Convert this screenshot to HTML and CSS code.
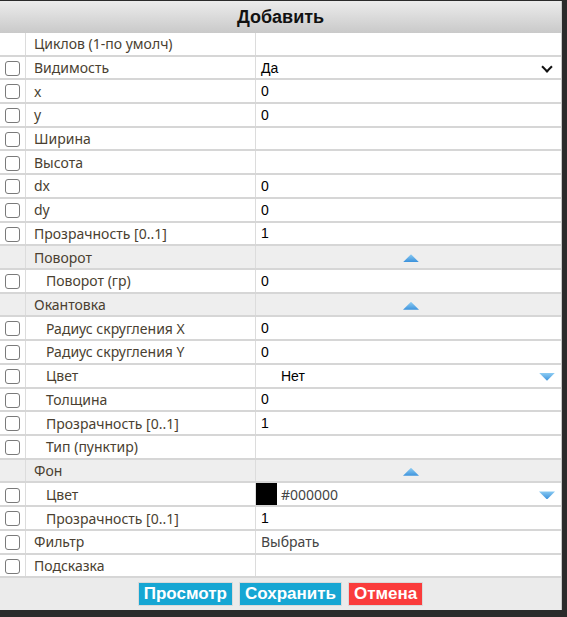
FILE: index.html
```html
<!DOCTYPE html>
<html lang="ru">
<head>
  <meta charset="UTF-8">
  <title>Добавить</title>
  <link rel="stylesheet" href="styles.css">
</head>
<body>
  <div class="window">
    <div class="title">Добавить</div>

    <table class="props">
      <tr>
        <td class="chk"></td>
        <td class="name">Циклов (1-по умолч)</td>
        <td class="val"></td>
      </tr>
      <tr>
        <td class="chk"><span class="box"></span></td>
        <td class="name">Видимость</td>
        <td class="val select">Да <span class="chevron"></span></td>
      </tr>
      <tr>
        <td class="chk"><span class="box"></span></td>
        <td class="name">x</td>
        <td class="val">0</td>
      </tr>
      <tr>
        <td class="chk"><span class="box"></span></td>
        <td class="name">y</td>
        <td class="val">0</td>
      </tr>
      <tr>
        <td class="chk"><span class="box"></span></td>
        <td class="name">Ширина</td>
        <td class="val"></td>
      </tr>
      <tr>
        <td class="chk"><span class="box"></span></td>
        <td class="name">Высота</td>
        <td class="val"></td>
      </tr>
      <tr>
        <td class="chk"><span class="box"></span></td>
        <td class="name">dx</td>
        <td class="val">0</td>
      </tr>
      <tr>
        <td class="chk"><span class="box"></span></td>
        <td class="name">dy</td>
        <td class="val">0</td>
      </tr>
      <tr>
        <td class="chk"><span class="box"></span></td>
        <td class="name">Прозрачность [0..1]</td>
        <td class="val">1</td>
      </tr>

      <tr class="group">
        <td class="chk"></td>
        <td class="name">Поворот</td>
        <td class="val center"><span class="tri-up"></span></td>
      </tr>
      <tr>
        <td class="chk"><span class="box"></span></td>
        <td class="name sub">Поворот (гр)</td>
        <td class="val">0</td>
      </tr>

      <tr class="group">
        <td class="chk"></td>
        <td class="name">Окантовка</td>
        <td class="val center"><span class="tri-up"></span></td>
      </tr>
      <tr>
        <td class="chk"><span class="box"></span></td>
        <td class="name sub">Радиус скругления X</td>
        <td class="val">0</td>
      </tr>
      <tr>
        <td class="chk"><span class="box"></span></td>
        <td class="name sub">Радиус скругления Y</td>
        <td class="val">0</td>
      </tr>
      <tr>
        <td class="chk"><span class="box"></span></td>
        <td class="name sub">Цвет</td>
        <td class="val picker"><span class="swatch empty"></span><span class="plain">Нет</span><span class="tri-down"></span></td>
      </tr>
      <tr>
        <td class="chk"><span class="box"></span></td>
        <td class="name sub">Толщина</td>
        <td class="val">0</td>
      </tr>
      <tr>
        <td class="chk"><span class="box"></span></td>
        <td class="name sub">Прозрачность [0..1]</td>
        <td class="val">1</td>
      </tr>
      <tr>
        <td class="chk"><span class="box"></span></td>
        <td class="name sub">Тип (пунктир)</td>
        <td class="val"></td>
      </tr>

      <tr class="group">
        <td class="chk"></td>
        <td class="name">Фон</td>
        <td class="val center"><span class="tri-up"></span></td>
      </tr>
      <tr>
        <td class="chk"><span class="box"></span></td>
        <td class="name sub">Цвет</td>
        <td class="val picker"><span class="swatch"></span><span class="hex">#000000</span><span class="tri-down"></span></td>
      </tr>
      <tr>
        <td class="chk"><span class="box"></span></td>
        <td class="name sub">Прозрачность [0..1]</td>
        <td class="val">1</td>
      </tr>
      <tr>
        <td class="chk"><span class="box"></span></td>
        <td class="name">Фильтр</td>
        <td class="val"><span class="link">Выбрать</span></td>
      </tr>
      <tr>
        <td class="chk"><span class="box"></span></td>
        <td class="name">Подсказка</td>
        <td class="val"></td>
      </tr>
    </table>

    <div class="actions">
      <button class="btn btn-blue">Просмотр</button>
      <button class="btn btn-blue">Сохранить</button>
      <button class="btn btn-red">Отмена</button>
    </div>
  </div>
</body>
</html>
```

FILE: styles.css
```css
body {
  margin: 0;
  background-color: #2b2b2b;
  font-family: 'Liberation Sans', Arial, sans-serif;
}

.window {
  width: 562px;
  height: 609px;
  margin-top: 1px;
  background-color: #ebebeb;
  border-right: 1px solid #c8c8c8;
  box-sizing: border-box;
}

.title {
  height: 32px;
  line-height: 33px;
  text-align: center;
  font-weight: bold;
  font-size: 18px;
  color: #111;
  background: linear-gradient(#ececec, #c9c9c9);
}

.props {
  width: 561px;
  border-collapse: collapse;
  background-color: #ffffff;
  table-layout: fixed;
}

.props td {
  height: 21.7px;
  padding: 0;
  border-bottom: 2px solid #d6d6d6;
  border-right: 1px solid #dcdcdc;
  white-space: nowrap;
  overflow: hidden;
}

.props td.chk {
  width: 25px;
  text-align: center;
}

.props td.name {
  width: 221px;
  padding-left: 8px;
  font-family: 'Noto Sans', sans-serif;
  font-size: 14px;
  color: #4a3f31;
}

.props td.name.sub {
  padding-left: 20px;
}

.props td.val {
  padding-left: 5px;
  font-size: 14px;
  color: #000;
  border-right: none;
  position: relative;
}

.group td {
  background-color: #eeeeee;
}

.box {
  display: inline-block;
  width: 13px;
  height: 13px;
  border: 1px solid #7a7a7a;
  border-radius: 3px;
  background-color: #fff;
  vertical-align: middle;
}

.center {
  text-align: center;
}

.tri-up {
  display: inline-block;
  width: 16px;
  height: 8px;
  vertical-align: middle;
  background: linear-gradient(#8dccf3, #3b92dc);
  clip-path: polygon(50% 0, 100% 100%, 0 100%);
}

.tri-down {
  position: absolute;
  right: 6px;
  top: 8px;
  width: 16px;
  height: 8px;
  background: linear-gradient(#8dccf3, #3b92dc);
  clip-path: polygon(0 0, 100% 0, 50% 100%);
}

.chevron {
  position: absolute;
  right: 10px;
  top: 6px;
  width: 6px;
  height: 6px;
  border-right: 2px solid #111;
  border-bottom: 2px solid #111;
  transform: rotate(45deg);
}

.props td.picker {
  padding-left: 0;
}

.swatch {
  display: inline-block;
  width: 21px;
  height: 22px;
  margin-right: 4px;
  background-color: #000;
  vertical-align: middle;
}

.swatch.empty {
  background-color: transparent;
}

.hex,
.link {
  font-family: 'Noto Sans', sans-serif;
  font-size: 14px;
  color: #444;
}

.plain,
.hex {
  vertical-align: middle;
}

.actions {
  display: flex;
  justify-content: center;
  gap: 6px;
  padding-top: 4px;
}

.btn {
  height: 24px;
  padding: 0 5px;
  border: 1px solid #dadada;
  font-family: 'Liberation Sans', Arial, sans-serif;
  font-weight: bold;
  font-size: 17px;
  color: #ffffff;
  cursor: pointer;
}

.btn-blue {
  background-color: #16a6d3;
}

.btn-red {
  background-color: #fa3c3c;
}
```
